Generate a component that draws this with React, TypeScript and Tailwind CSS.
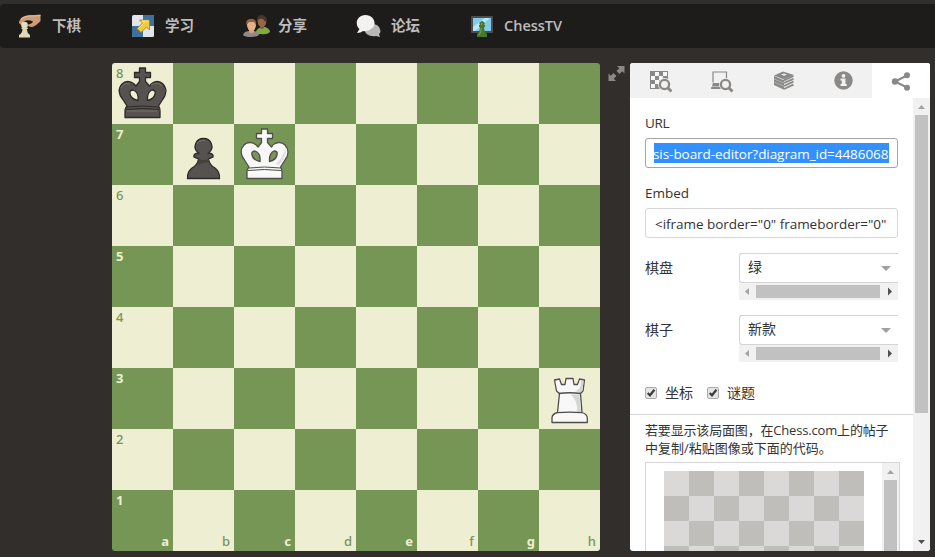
import type { ReactNode } from "react";

const CJK = "font-['Open_Sans','Noto_Sans_CJK_SC',sans-serif]";

function Nav({ icon, label, width }: { icon: ReactNode; label: string; width: string }) {
  return (
    <div className={`flex h-full shrink-0 items-center ${width}`}>
      {icon}
      <span className="text-[14.500px] font-semibold leading-[20px] text-[#bdbcbb]">{label}</span>
    </div>
  );
}

const PlayIcon = () => (
  <svg width="26" height="26" viewBox="0 0 26 26" className="mr-[8px]">
    <path d="M1 10C1 6 6 2 12 2Q17 2 22.500 1.500V8Q18 13 14 14Q10 14 9.500 11.500Q14 11 15 8.500Q10 6 6 8.500L3 12Z" fill="#cb9c78" />
    <path d="M3 6C6 3 10 3 14 3Q19 2.500 22.500 2.500" stroke="#e3b893" strokeWidth="1.200" fill="none" />
    <circle cx="6.500" cy="12" r="3.300" fill="#e3dfbd" />
    <path d="M3.500 14.500H9.800V16H8.700Q9 20 12 22V24.500H1V22Q4.500 20 4.500 16H3.500Z" fill="#dedab8" />
  </svg>
);
const LearnIcon = () => (
  <svg width="22" height="22" viewBox="0 0 22 22" className="mr-[11px]">
    <rect width="22" height="22" rx="1.500" fill="#dfe5ea" />
    <path d="M11 0H20.500Q22 0 22 1.500V11H11ZM0 11H11V22H1.500Q0 22 0 20.500Z" fill="#3c709d" />
    <path d="M5 13.500L10.500 8L7.500 5H17.500V15L14.500 12L9 17.500Z" fill="#f5cb35" stroke="#a87b19" strokeWidth=".8" />
    <path d="M6.500 13.500L12.500 7.500L10 6H16.500" stroke="#ffe983" fill="none" />
  </svg>
);
const ShareIcon = () => (
  <svg width="27" height="23" viewBox="0 0 27 23" className="mr-[8px]">
    <path d="M12 19Q13 14 18 12H22Q27 14 27 17Q24 20 18 19Z" fill="#82aa3f" />
    <path d="M17 10H21V13Q19 15 17 13Z" fill="#85583d" />
    <ellipse cx="19" cy="6.500" rx="4.300" ry="5.500" fill="#966747" />
    <path d="M14 7Q13 1 18 0Q23 0 24 5L22 7Q21 3 16 4Z" fill="#49332a" />
    <path d="M0 20Q1 16 7 16H11Q16 17 16 20Q13 22 8 22Q2 22 0 20Z" fill="#8d8b88" />
    <path d="M6 13H11V17Q8.500 20 6 17Z" fill="#d99f79" />
    <ellipse cx="8.500" cy="10" rx="4.500" ry="6" fill="#e5b088" />
    <path d="M3.500 10Q2 4 8 4Q14 4 13 10L11 7H6Z" fill="#98633b" />
  </svg>
);
const ForumIcon = () => (
  <svg width="26" height="23" viewBox="0 0 26 23" className="-ml-px mr-[9px]">
    <path d="M24 22L20 21C14 22 8 19 9 14S19 7 23 12Q26 17 23 19Z" fill="#b9b8b5" />
    <path d="M1 18L3.500 14C-2 9 1 0 9.500 0S22 10 15 14Q11 17 7 16Q5 18 1 18Z" fill="#f2f2f1" />
  </svg>
);
const TvIcon = () => (
  <svg width="22" height="22" viewBox="0 0 22 22" className="mr-[11px]">
    <rect y="1" width="22" height="17" rx="1" fill="#4b4f51" />
    <rect x="2" y="3" width="18" height="13" fill="#83cbea" />
    <path d="M2 12L14 3H19L4 16H2Z" fill="#b9e8f8" />
    <path d="M9 10Q7 7 11 6Q15 7 13 10H14V12H13Q13 17 16 19V22H6V19Q9 17 9 12H8V10Z" fill="#47772c" />
    <path d="M10.500 8V10M10.500 13Q10 17 8 20" stroke="#76a34c" strokeWidth="1.200" fill="none" />
  </svg>
);

function King({ white }: { white?: boolean }) {
  const fill = white ? "#f8f8f8" : "#565250";
  const line = white ? "#504e4b" : "#2d2a29";
  return (
    <svg width="61" height="61" viewBox="0 0 61 61" className="block">
      <path
        fillRule="evenodd"
        d="M27.500 5H33.500V9.500H38.500V14.500H33.500V18.500L37.500 23C41 18 47 17 51 21C55.500 26 54 32 51 36L46.500 43Q48 45 48 48V54.500H13V48Q13 45 15 43L10.500 36C7 32 5.500 26 10 21C14 17 20 18 24 23L27.500 18.500V14.500H22.500V9.500H27.500ZM26 37.500Q27 29 21 27Q17 27.500 18 31Q19 36 26 37.500ZM35.500 37.500Q42 36 43 31Q44 27 40 27Q35 29 35.500 37.500Z"
        fill={fill}
        stroke={line}
        strokeWidth="1.300"
        strokeLinejoin="round"
      />
      <path d="M15 44Q30.500 42 46.500 44M14 46.500Q30.500 44.500 47 46.500" stroke={line} strokeWidth="1" fill="none" />
      <path d="M15 48H45M9 25Q12 19 18 21M39 22Q46 18 50 23" stroke={white ? "#ffffff" : "#777370"} strokeWidth="1" fill="none" />
      {white && <path d="M51 24Q53 29 49 35L45 41L42 40Q50 33 51 24" fill="#dcdcdc" />}
    </svg>
  );
}
const Pawn = () => (
  <svg width="61" height="61" viewBox="0 0 61 61" className="block">
    <path
      d="M25.500 29C19 24 22.500 14.500 30.500 14.500S42 24 35.500 29Q41 29.500 40 33L35.500 35Q36.500 41 42 44Q47 48 46.500 54.500H14.500Q14 48 19 44Q24.500 41 25.500 35L21 33Q20 29.500 25.500 29Z"
      fill="#565250"
      stroke="#2d2a29"
      strokeWidth="1.300"
    />
    <path d="M25.500 35Q31 37 35.500 35L36.500 38Q29 39 24 41Z" fill="#45413f" />
    <path d="M24 20Q26 16 32 16.500" stroke="#777370" fill="none" />
  </svg>
);
const Rook = () => (
  <svg width="61" height="61" viewBox="0 0 61 61" className="block">
    <path
      d="M15.500 12L20.500 11L22.500 16.500H26L27 10.500H34L35 16.500H38.500L40.500 11L45.500 12L44 23L41.500 25.500L43 44.500Q48 46 48.300 50V54.500H13V50Q13 46 18.500 44.500L20.500 25.500L17.500 23Z"
      fill="#f8f8f8"
      stroke="#504e4b"
      strokeWidth="1.300"
      strokeLinejoin="round"
    />
    <path d="M42 12.500L44.500 13L43.500 22L41 24.500L36 23Q42 22 42 12.500ZM32 26.500H40.500L42 44H38Q39 33 32 26.500Z" fill="#d6d6d6" />
    <path d="M19.500 25.500Q30.500 24 42 25.500M18.500 44.700Q30.500 43.500 43 44.700" stroke="#504e4b" strokeWidth="1.300" fill="none" />
  </svg>
);

const pieces: Record<string, ReactNode> = {
  a8: <King />,
  b7: <Pawn />,
  c7: <King white />,
  h3: <Rook />,
};

function Board() {
  return (
    <div className="grid h-[488px] w-[488px] shrink-0 grid-cols-8 grid-rows-8 overflow-hidden rounded-[3px] font-['Noto_Sans',sans-serif] text-[13px] leading-none">
      {Array.from({ length: 64 }, (_, i) => {
        const r = Math.floor(i / 8);
        const c = i % 8;
        const dark = (r + c) % 2 === 1;
        const id = "abcdefgh"[c] + (8 - r);
        return (
          <div key={id} className={`relative ${dark ? "bg-[#769656] font-bold text-[#eeeed2]" : "bg-[#eeeed2] font-medium text-[#769656]"}`}>
            {c === 0 && <span className="absolute left-[4px] top-[4px]">{8 - r}</span>}
            {r === 7 && <span className="absolute bottom-[3px] right-[4px]">{"abcdefgh"[c]}</span>}
            {pieces[id] && <div className="relative">{pieces[id]}</div>}
          </div>
        );
      })}
    </div>
  );
}

function HScroll() {
  return (
    <div className="flex h-[17px] items-center bg-[#f1f1f1]">
      <svg width="17" height="17" viewBox="0 0 17 17"><path d="M10 5V12L6 8.500Z" fill="#a3a3a3" /></svg>
      <div className="h-[13px] w-[124px] bg-[#c1c1c1]" />
      <svg width="18" height="17" viewBox="0 0 18 17"><path d="M8 4.500V12.500L12 8.500Z" fill="#505050" /></svg>
    </div>
  );
}

function Field({ label, value }: { label: string; value: string }) {
  return (
    <div className="mb-[15px] flex">
      <span className="w-[94px] text-[14px] leading-[30px]">{label}</span>
      <div className="w-[159px]">
        <div className="flex h-[30px] items-center justify-between rounded-l-[3px] border border-r-0 border-[#d5d5d5] pl-[8px] pr-[7px] text-[14px]">
          <span className="pb-[2px] leading-[20px]">{value}</span>
          <svg width="10" height="5" viewBox="0 0 10 5"><path d="M0 0H10L5 5Z" fill="#a1a1a1" /></svg>
        </div>
        <HScroll />
      </div>
    </div>
  );
}

function Check({ label }: { label: string }) {
  return (
    <div className="flex items-center">
      <svg width="12" height="12" viewBox="0 0 12 12" className="mr-[8px]">
        <rect x=".5" y=".5" width="11" height="11" rx="1.500" fill="#e4e4e4" stroke="#aaa" />
        <path d="M2.700 6L5 8.300L9.400 2.800" stroke="#3c3c3c" strokeWidth="2.200" fill="none" />
      </svg>
      <span className="text-[14px] leading-[20px]">{label}</span>
    </div>
  );
}

const Lens = () => (
  <>
    <circle cx="14.500" cy="13.500" r="6.500" fill="#f1f1f1" />
    <circle cx="14.500" cy="13.500" r="4.600" fill="#f1f1f1" stroke="#8b8987" strokeWidth="2.300" />
    <path d="M18 17L21.500 20.500" stroke="#8b8987" strokeWidth="3" />
  </>
);

function Tabs() {
  return (
    <div className="flex h-[35px] bg-[#f1f1f1]">
      <div className="flex w-[61px] items-center justify-center pt-[3px]">
        <svg width="22" height="22" viewBox="0 0 22 22">
          <rect x=".5" y=".5" width="17" height="17" fill="#f8f8f8" stroke="#8b8987" />
          <path d="M0 0H5V5H0ZM9 0H13V5H9ZM5 5H9V9H5ZM13 5H18V9H13ZM0 9H5V13H0ZM9 9H13V13H9ZM5 13H9V18H5Z" fill="#8b8987" />
          <Lens />
        </svg>
      </div>
      <div className="flex w-[62px] items-center justify-center pt-[3px]">
        <svg width="23" height="22" viewBox="0 0 23 22">
          <path d="M2 11.500V1H15.500V9" fill="none" stroke="#8b8987" strokeWidth="1.200" />
          <path d="M2 12H11V15.500H.8ZM.3 16H12V18H0Z" fill="#8b8987" />
          <Lens />
        </svg>
      </div>
      <div className="flex w-[62px] items-center justify-center">
        <svg width="20" height="19" viewBox="0 0 20 19">
          <path d="M0 4.500L9 .500L20 4L10 8.500Z" fill="#8b8987" />
          <path d="M7 3.500L10 2.500L13 3.700L10 4.800Z" fill="#f1f1f1" />
          <path d="M0 5L10 9.300V18.700L0 14Z" fill="#8b8987" />
          <path d="M0 8L10 12M0 11L10 15.200" stroke="#d9d8d7" strokeWidth=".5" />
          <path d="M10 9.300L19.500 5M10 12L19.500 7.800M10 15L19.500 10.700M10 18L19.500 13.700" stroke="#8b8987" strokeWidth="1.900" />
        </svg>
      </div>
      <div className="flex w-[57px] items-center justify-center pr-[1px]">
        <svg width="19" height="19" viewBox="0 0 19 19">
          <circle cx="9.500" cy="9.500" r="9.200" fill="#8b8987" />
          <circle cx="9.500" cy="4.800" r="1.900" fill="#f1f1f1" />
          <path d="M6.500 7.500H11.500V13H12.700V15H6.500V13H7.800V9.500H6.500Z" fill="#f1f1f1" />
        </svg>
      </div>
      <div className="flex w-[58px] items-center justify-center bg-white pt-[2px]">
        <svg width="20" height="20" viewBox="0 0 20 20">
          <path d="M16 3.500L4 9.500L16 15.500" stroke="#8b8987" strokeWidth="2" fill="none" />
          <circle cx="16" cy="3.300" r="3" fill="#8b8987" />
          <circle cx="4" cy="9.500" r="3.200" fill="#8b8987" />
          <circle cx="16" cy="15.700" r="3" fill="#8b8987" />
        </svg>
      </div>
    </div>
  );
}

function Panel() {
  return (
    <div className="ml-[8px] flex h-[488px] w-[300px] shrink-0 flex-col overflow-hidden rounded-[3px] bg-white text-[#333]">
      <Tabs />
      <div className="flex min-h-0 flex-1">
        <div className="flex w-[284px] shrink-0 flex-col overflow-hidden">
          <div className="px-[15px] pt-[15px]">
            <div className="mb-[5px] text-[13.500px] leading-[20px] tracking-[-0.300px]">URL</div>
            <div className="mb-[15px] flex h-[30px] w-[253px] items-center rounded-[3px] border border-[#a4a4a4] px-[8px]">
              <div className="h-[20px] w-[235px] whitespace-nowrap bg-[#3390ff] text-[13.500px] leading-[22px] tracking-[-0.060px] text-white">
                <span className="-ml-px">sis-board-editor?diagram_id=4486068</span>
              </div>
            </div>
            <div className="mb-[5px] text-[13.500px] leading-[20px]">Embed</div>
            <div className="mb-[15px] flex h-[30px] w-[253px] items-center whitespace-nowrap rounded-[3px] border border-[#d5d5d5] pl-[9px] pt-[2px] text-[13.500px] tracking-[-0.030px]">
              <span>&lt;iframe border="0" frameborder="0"</span>
            </div>
            <Field label="棋盘" value="绿" />
            <Field label="棋子" value="新款" />
            <div className="flex h-[37px] items-start gap-[14px] pt-[6px]">
              <Check label="坐标" />
              <Check label="谜题" />
            </div>
          </div>
          <div className="flex min-h-0 flex-1 flex-col border-t border-[#d5d5d5] pl-[15px] pt-[6px]">
            <div className="whitespace-nowrap text-[13px] leading-[18px]">
              <div className="tracking-[-0.170px]">若要显示该局面图，在Chess.com上的帖子</div>
              <div>中复制/粘贴图像或下面的代码。</div>
            </div>
            <div className="mt-[5px] flex min-h-0 w-[255px] flex-1 justify-between overflow-hidden border border-b-0 border-[#d5d5d5]">
              <div className="ml-[18px] mt-[8px] grid h-[100px] w-[200px] grid-cols-8 grid-rows-4">
                {Array.from({ length: 32 }, (_, i) => (
                  <div key={i} className={(Math.floor(i / 8) + i) % 2 ? "bg-[#bfbeba]" : "bg-[#dad9d7]"} />
                ))}
              </div>
              <div className="flex w-[17px] flex-col items-center bg-[#f1f1f1]">
                <svg width="17" height="17" viewBox="0 0 17 17" className="shrink-0"><path d="M5 11H12L8.500 7Z" fill="#a3a3a3" /></svg>
                <div className="w-[13px] flex-1 bg-[#c1c1c1]" />
              </div>
            </div>
          </div>
        </div>
        <div className="-ml-px flex w-[17px] flex-col items-center justify-between bg-[#f1f1f1]">
          <div className="flex flex-col items-center">
            <svg width="17" height="17" viewBox="0 0 17 17"><path d="M5 11H12L8.500 7Z" fill="#a3a3a3" /></svg>
            <div className="h-[298px] w-[13px] bg-[#c1c1c1]" />
          </div>
          <svg width="17" height="17" viewBox="0 0 17 17"><path d="M5 6H12L8.500 10Z" fill="#505050" /></svg>
        </div>
      </div>
    </div>
  );
}

export default function App() {
  return (
    <div className={`h-[557px] w-[935px] overflow-hidden bg-[#312e2b] pt-[4px] ${CJK}`}>
      <div className="flex h-[44px] items-center rounded-l-[4px] bg-[#1e1c1a] pl-[18px]">
        <Nav icon={<PlayIcon />} label="下棋" width="w-[114px]" />
        <Nav icon={<LearnIcon />} label="学习" width="w-[111px]" />
        <Nav icon={<ShareIcon />} label="分享" width="w-[114px]" />
        <Nav icon={<ForumIcon />} label="论坛" width="w-[114px]" />
        <Nav icon={<TvIcon />} label="ChessTV" width="w-[110px]" />
      </div>
      <div className="flex pl-[112px] pt-[15px]">
        <Board />
        <svg width="18" height="18" viewBox="0 0 18 18" className="ml-[8px] mr-[-4px] mt-[2px] shrink-0">
          <path d="M9 1H16.500V8.500L14.300 6.300L11.500 9L8.500 6L11.200 3.200ZM.500 8.500L2.700 10.700L5.500 8L8.500 11L5.800 13.800L8 16H.500Z" fill="#8b8987" />
        </svg>
        <Panel />
      </div>
    </div>
  );
}
